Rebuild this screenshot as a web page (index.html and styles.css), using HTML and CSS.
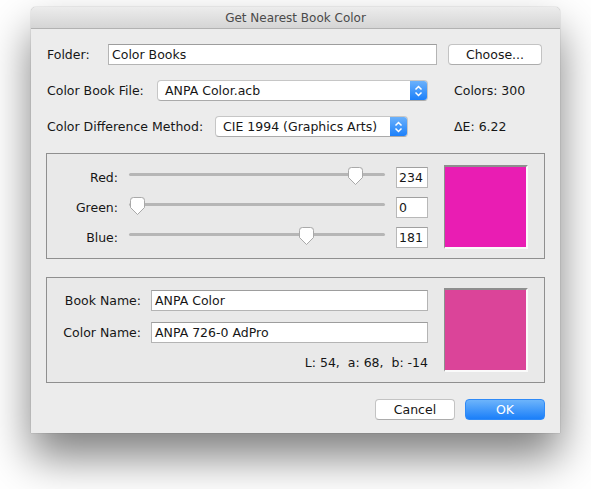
FILE: index.html
```html
<!DOCTYPE html>
<html>
<head>
<meta charset="utf-8">
<title>Get Nearest Book Color</title>
<link rel="stylesheet" href="styles.css">
</head>
<body>
<div class="stage">
<div class="window">
  <div class="titlebar">Get Nearest Book Color</div>
  <div class="content">
    <div class="row">
      <span class="lbl w-folder">Folder:</span>
      <div class="field f-folder">Color Books</div>
      <div class="btn choose">Choose...</div>
    </div>
    <div class="row">
      <span class="lbl w-file">Color Book File:</span>
      <div class="popup p-file">
        <span class="ptext">ANPA Color.acb</span>
        <span class="parrow"><svg width="17" height="20" viewBox="0 0 17 20"><path d="M5.5 8.5 L8.5 5.5 L11.5 8.5 M5.5 11.5 L8.5 14.5 L11.5 11.5" fill="none" stroke="#fff" stroke-width="1.5"/></svg></span>
      </div>
      <span class="info">Colors: 300</span>
    </div>
    <div class="row">
      <span class="lbl w-method">Color Difference Method:</span>
      <div class="popup p-method">
        <span class="ptext">CIE 1994 (Graphics Arts)</span>
        <span class="parrow"><svg width="17" height="20" viewBox="0 0 17 20"><path d="M5.5 8.5 L8.5 5.5 L11.5 8.5 M5.5 11.5 L8.5 14.5 L11.5 11.5" fill="none" stroke="#fff" stroke-width="1.5"/></svg></span>
      </div>
      <span class="info info-de">ΔE: 6.22</span>
    </div>

    <div class="group g-rgb">
      <div class="sliders">
        <div class="srow">
          <span class="slbl">Red:</span>
          <div class="track"><div class="rail"></div><div class="thumb" style="left:218px"><svg width="17" height="19" viewBox="0 0 17 19"><path d="M1.5 3.5 Q1.5 0.5 4.5 0.5 H12.5 Q15.5 0.5 15.5 3.5 V10.5 L8.5 17.5 L1.5 10.5 Z" fill="#fff" stroke="#a9a9a9"/></svg></div></div>
          <div class="nfield">234</div>
        </div>
        <div class="srow">
          <span class="slbl">Green:</span>
          <div class="track"><div class="rail"></div><div class="thumb" style="left:0px"><svg width="17" height="19" viewBox="0 0 17 19"><path d="M1.5 3.5 Q1.5 0.5 4.5 0.5 H12.5 Q15.5 0.5 15.5 3.5 V10.5 L8.5 17.5 L1.5 10.5 Z" fill="#fff" stroke="#a9a9a9"/></svg></div></div>
          <div class="nfield">0</div>
        </div>
        <div class="srow">
          <span class="slbl">Blue:</span>
          <div class="track"><div class="rail"></div><div class="thumb" style="left:169px"><svg width="17" height="19" viewBox="0 0 17 19"><path d="M1.5 3.5 Q1.5 0.5 4.5 0.5 H12.5 Q15.5 0.5 15.5 3.5 V10.5 L8.5 17.5 L1.5 10.5 Z" fill="#fff" stroke="#a9a9a9"/></svg></div></div>
          <div class="nfield">181</div>
        </div>
      </div>
      <div class="swatch sw-rgb"></div>
    </div>

    <div class="group g-book">
      <div class="bookcol">
        <div class="brow">
          <span class="blbl">Book Name:</span>
          <div class="field f-book">ANPA Color</div>
        </div>
        <div class="brow">
          <span class="blbl">Color Name:</span>
          <div class="field f-book">ANPA 726-0 AdPro</div>
        </div>
        <div class="lab">L: 54,&nbsp; a: 68,&nbsp; b: -14</div>
      </div>
      <div class="swatch sw-book"></div>
    </div>

    <div class="buttons">
      <div class="btn cancel">Cancel</div>
      <div class="btn ok">OK</div>
    </div>
  </div>
</div>
</div>
</body>
</html>
```
FILE: styles.css
```css
html, body {
  margin: 0;
  padding: 0;
  background: #ffffff;
}
body {
  font-family: "DejaVu Sans", "Liberation Sans", sans-serif;
  font-size: 12.5px;
  color: #161616;
}
.stage {
  padding: 7px 0 56px 31px;
  min-height: 489px;
  box-sizing: border-box;
}
.window {
  width: 529px;
  background: #ececec;
  border-radius: 5px 5px 0 0;
  box-shadow: 0 24px 44px rgba(0,0,0,0.5), 0 0 1px rgba(0,0,0,0.5);
}
.titlebar {
  height: 21px;
  line-height: 22px;
  text-align: center;
  font-size: 12px;
  color: #4a4a4a;
  background: linear-gradient(#ececec, #d5d5d5);
  border-bottom: 1px solid #b2b2b2;
  border-radius: 5px 5px 0 0;
}
.content {
  padding: 15px 15px 13px 15px;
  display: flex;
  flex-direction: column;
}
.row {
  display: flex;
  align-items: center;
  height: 21px;
  margin-bottom: 15px;
}
.lbl {
  flex: none;
  padding-left: 1px;
  box-sizing: border-box;
}
.w-folder { width: 62px; }
.w-file { width: 111px; }
.w-method { width: 169px; }
.field {
  box-sizing: border-box;
  height: 21px;
  line-height: 19px;
  background: #fff;
  border: 1px solid #b4b4b4;
  border-top-color: #9d9d9d;
  padding: 0 3px;
  white-space: nowrap;
}
.f-folder { width: 329px; }
.btn {
  box-sizing: border-box;
  height: 21px;
  line-height: 19px;
  text-align: center;
  background: #fff;
  border: 1px solid #c3c3c3;
  border-bottom-color: #acacac;
  border-radius: 4px;
}
.choose {
  width: 94px;
  margin-left: 11px;
}
.popup {
  box-sizing: border-box;
  height: 21px;
  display: flex;
  background: #fff;
  border: 1px solid #c6c6c6;
  border-bottom-color: #aaaaaa;
  border-radius: 4px;
  overflow: hidden;
}
.p-file { width: 271px; }
.p-method { width: 193px; }
.ptext {
  flex: 1;
  line-height: 19px;
  padding-left: 7px;
  white-space: nowrap;
}
.parrow {
  flex: none;
  width: 17px;
  height: 19px;
  background: linear-gradient(#6bb1fb, #1c80fa);
  display: flex;
  align-items: center;
  justify-content: center;
}
.parrow svg { display: block; }
.info {
  margin-left: 26px;
}
.info-de { margin-left: 46px; }

.group {
  box-sizing: border-box;
  width: 499px;
  height: 106px;
  border: 1px solid #8f8f8f;
  background: #e9e9e9;
  display: flex;
  align-items: flex-start;
}
.g-rgb {
  margin-top: 1px;
  padding-top: 11px;
}
.sliders {
  display: flex;
  flex-direction: column;
  gap: 8px;
  padding-top: 1px;
}
.srow {
  display: flex;
  align-items: center;
  height: 22px;
}
.slbl {
  width: 71px;
  text-align: right;
  flex: none;
}
.track {
  position: relative;
  width: 256px;
  height: 22px;
  margin-left: 11px;
  flex: none;
}
.rail {
  margin-top: 7px;
  height: 3px;
  background: #b6b6b6;
  border-radius: 2px;
}
.thumb {
  position: absolute;
  top: 1px;
}
.thumb svg {
  display: block;
  filter: drop-shadow(0 0.5px 0.5px rgba(0,0,0,0.15));
}
.nfield {
  box-sizing: border-box;
  width: 32px;
  height: 21px;
  line-height: 19px;
  margin-left: 11px;
  background: #fff;
  border: 1px solid #b8b8b8;
  border-top-color: #a0a0a0;
  padding-left: 2px;
}
.swatch {
  box-sizing: border-box;
  flex: none;
  width: 84px;
  height: 84px;
  margin-left: 16px;
  border-top: 2px solid #8e8e8e;
  border-left: 1px solid #8e8e8e;
  border-right: 2px solid #fafafa;
  border-bottom: 2px solid #fafafa;
}
.sw-rgb { background: #e91db3; }
.sw-book { background: #db4499; }

.g-book {
  margin-top: 18px;
  padding-top: 12px;
}
.g-book .swatch { margin-top: -2px; }
.bookcol {
  display: flex;
  flex-direction: column;
  gap: 11px;
}
.brow {
  display: flex;
  align-items: center;
  height: 21px;
}
.blbl {
  width: 94px;
  text-align: right;
  flex: none;
}
.f-book {
  width: 277px;
  margin-left: 10px;
}
.lab {
  text-align: right;
  line-height: 15px;
  margin-top: 1px;
}

.buttons {
  display: flex;
  justify-content: flex-end;
  gap: 10px;
  margin-top: 16px;
}
.cancel { width: 80px; }
.ok {
  width: 80px;
  color: #fff;
  border: 1px solid #2f8af7;
  background: linear-gradient(#6db4fb, #1b7ff9);
}
```
